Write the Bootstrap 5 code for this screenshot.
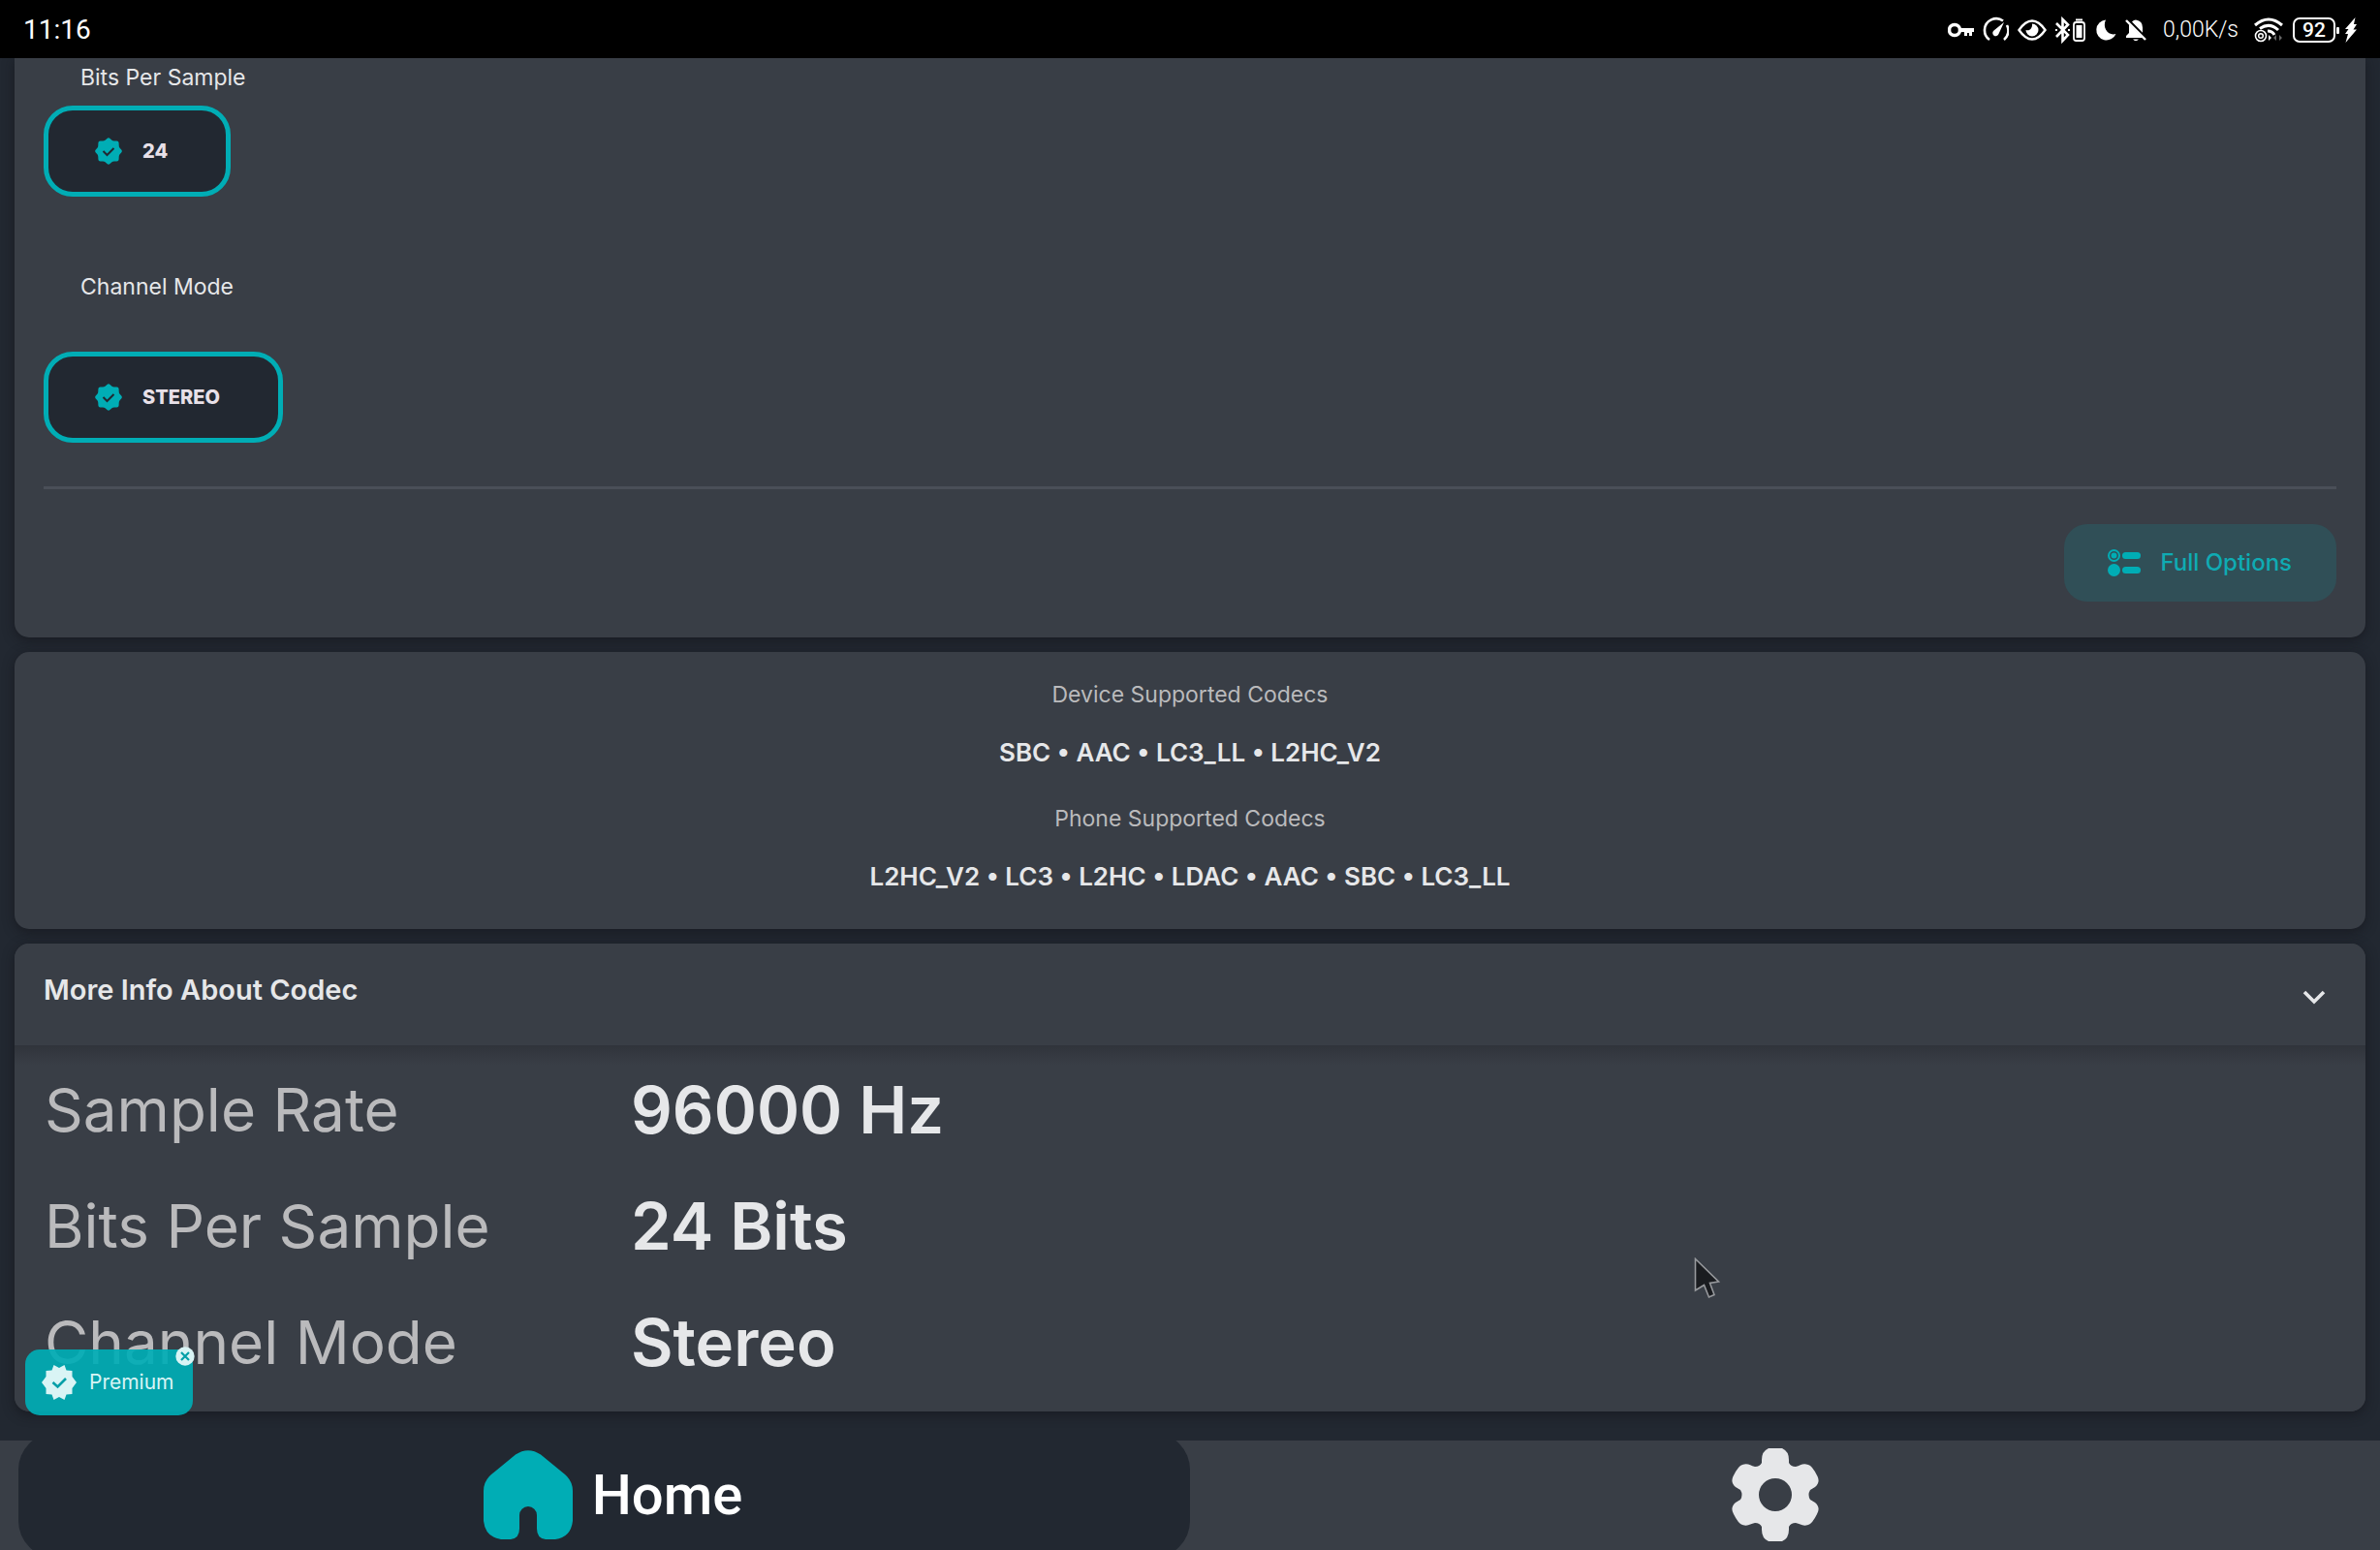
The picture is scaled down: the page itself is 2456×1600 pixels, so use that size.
<!DOCTYPE html>
<html lang="en">
<head>
<meta charset="utf-8">
<meta name="viewport" content="width=device-width, initial-scale=1">
<title>Codec settings</title>
<link rel="stylesheet" href="https://cdn.jsdelivr.net/npm/bootstrap@5.3.0/dist/css/bootstrap.min.css">
<style>
:root{--accent:#00adb5;--ink:#222831;--panel:#393e46;--text:#e6e7e9;--soft:#bababc}
body{background:var(--ink);color:var(--text);font-family:Inter,Roboto,sans-serif;font-size:23px;line-height:32px}
svg{display:block;flex:none}
.app{height:100vh;overflow:hidden}
.statusbar{height:60px;background:#000;color:#fff;padding:2px 24px 0;font-family:Roboto,sans-serif;z-index:2}
.clock{font-size:28px}
.tray{gap:9px}
.rate{font-weight:300;padding:0 6px 0 8px}
.bolt{margin-left:-4px}
.screen{padding:0 15px;gap:15px;min-height:0;flex:1 1 auto}
.panel{background:var(--panel);border-radius:15px;box-shadow:0 3px 12px rgba(20,20,26,.65);flex:none}
.panel-top{border-radius:0 0 15px 15px;padding:4px 30px 37px}
.opt-label{padding-left:38px}
.chip{height:94px;padding:0 60px 0 48px;gap:21px;border:5px solid var(--accent);border-radius:30px;background:var(--ink);color:#e8e0e8;font-size:20px;font-weight:800}
.chip-bits{margin:13px 0 77px}
.chip-mode{margin:51px 0 45px}
.rule{height:3px;margin:0 0 36px;background:#4a4f58;opacity:1;border:0}
.full{height:80px;padding:0 46px 0 45px;gap:20px;border:0;border-radius:24px;background:#304f57;color:#0fabb3;font-size:24px;font-weight:500}
.codecs{padding:28px 30px 38px;text-align:center}
.codec-label{color:var(--soft)}
.codec-list{font-size:26px;font-weight:600;margin:28px 0 36px}
.codec-list:last-child{margin-bottom:0}
.info-head{height:105px;padding:0 41px 10px 30px;background:var(--panel);color:var(--text);border:0;border-radius:15px 15px 0 0;font-size:29px;font-weight:600}
.info-body{padding:7px 30px 11px;background:linear-gradient(#30343b,#393e46 20px)}
.info-row{height:120px}
.info-key{width:605px;font-size:62px;font-weight:400;color:var(--soft);line-height:80px}
.info-val{font-size:67px;font-weight:600;line-height:80px}
.premium{left:26px;bottom:139px;width:173px;height:68px;padding:0 0 0 17px;gap:13px;border:0;border-radius:15px;background:rgba(0,173,181,.92);color:#d9f4f5;font-size:21px}
.shut{left:181px;bottom:190px;width:20px;height:20px;padding:0;border:0;background:none}
.tabs{height:113px;background:var(--panel);overflow:hidden;flex:none}
.tab{flex:1 1 0;padding:0 20px 2px 0;color:#fff;text-decoration:none;font-family:Roboto,sans-serif;font-size:58px;font-weight:500}
.tab-on{flex:0 0 calc(50% - 19px);margin:-8px 0 -8px 19px;padding:0 0 2px 18px;background:var(--ink);border-radius:38px;gap:20px}
.pointer{left:1748px;top:1298px}
</style>
<script src="https://cdn.jsdelivr.net/npm/bootstrap@5.3.0/dist/js/bootstrap.bundle.min.js"></script>
</head>
<body>
<svg width="0" height="0" class="position-absolute" aria-hidden="true">
  <symbol id="seal" viewBox="0 0 28 28"><path d="M12.500 1q1.500-1.500 3 0l2 1.800q1 .7 2.500.6l2.500.1q2 0 2.100 2l.1 2.500q0 1.500.7 2.500l1.800 2q1.300 1.500 0 3l-1.800 2q-.7 1-.7 2.500l-.1 2.500q-.1 2-2.100 2l-2.500.1q-1.500 0-2.500.7l-2 1.700q-1.500 1.500-3 0l-2-1.700q-1-.7-2.500-.7l-2.500-.1q-2 0-2.100-2L3.300 20q0-1.500-.7-2.500l-1.800-2q-1.300-1.500 0-3l1.800-2q.7-1 .7-2.500l.1-2.500q.1-2 2.100-2L8 3.400q1.500 0 2.500-.6z" fill="#00adb5"/><path d="M8.500 14l4 4 7-7" fill="none" stroke="#222831" stroke-width="2"/></symbol>
</svg>
<div class="app d-flex flex-column position-relative">
  <header class="statusbar d-flex align-items-center justify-content-between flex-shrink-0">
    <span class="clock">11:16</span>
    <div class="tray d-flex align-items-center">
      <svg width="27" height="28" viewBox="0 0 27 28"><circle cx="7" cy="14" r="5.500" fill="none" stroke="#fff" stroke-width="3.500"/><path d="M13 12h14v4h-2v4h-3v-3h-2v3h-3v-4h-4z" fill="#fff"/></svg>
      <svg width="27" height="28" viewBox="0 0 27 28"><path d="M6 24A12 12 0 0 1 1 13.500 12 12 0 0 1 20 4.500M24 9a12 12 0 0 1-3 15" transform="translate(1 0)" fill="none" stroke="#fff" stroke-width="2.600"/><path d="M22 6L16.500 18a3.200 3.200 0 1 1-5-3.500z" fill="#fff"/></svg>
      <svg width="30" height="28" viewBox="0 0 30 28"><path d="M1.500 14Q8 4.500 15 4.500T28.500 14Q22 23.500 15 23.500T1.500 14z" fill="none" stroke="#fff" stroke-width="2.400"/><path d="M15 7.500a6.500 6.500 0 1 1-6.500 6.500c4 1.500 7-2 6.500-6.500z" fill="#fff"/></svg>
      <svg width="32" height="28" viewBox="0 0 32 28"><path d="M1 7l12 12-5.500 6V3L13 8.500 1 21" fill="none" stroke="#fff" stroke-width="2.600"/><path d="M0 14h2M13 14h2" stroke="#fff" stroke-width="2"/><rect x="19" y="6" width="11" height="19" rx="2.500" fill="none" stroke="#fff" stroke-width="1.800"/><path d="M21.500 9h6v13h-6zM21 2.500h7v2h-7z" fill="#fff"/></svg>
      <svg width="22" height="28" viewBox="0 0 22 28"><path d="M11 3.500A10.500 10.500 0 1 0 21.500 18C14 20.500 7 12 11 3.500z" fill="#fff"/></svg>
      <svg width="22" height="28" viewBox="0 0 22 28"><path d="M4 8l14 14H1v-2l3-3zM7 5.500Q9 3.500 11 3.500q7 1 7 8v5.200zM8 23.500h6q-3 3.500-6 0z" fill="#fff"/><path d="M1 4l20 20" stroke="#fff" stroke-width="2.400"/></svg>
      <span class="rate">0,00K/s</span>
      <svg width="32" height="28" viewBox="0 0 32 28"><g fill="none" stroke="#fff"><path d="M2 9q14-12 28 0M7 12.500q10-7 19 1.500M15 15q5 0 7 4" stroke-width="3"/><circle cx="8" cy="20" r="5.500" stroke-width="1.600"/><circle cx="8" cy="20" r="2.300" stroke-width="1.500"/></g><path d="M16 19l3 3-3 3z" fill="#fff"/><path d="M21 22l3-3v6zM30 22l-3-3v6z" fill="#666"/></svg>
      <svg width="49" height="28" viewBox="0 0 49 28"><rect x="1" y="2" width="42" height="24" rx="6" fill="none" stroke="#fff" stroke-width="2"/><rect x="45" y="11" width="3" height="7" rx="1" fill="#fff"/><text x="22" y="21" text-anchor="middle" font-size="21" font-weight="500" fill="#fff">92</text></svg>
      <svg class="bolt" width="12" height="28" viewBox="0 0 12 28"><path d="M10.500 1L0 13h3.500L0 18h3L.500 27 12 13.500H8.500L12 8H9z" fill="#fff"/></svg>
    </div>
  </header>

  <main class="screen d-flex flex-column">
    <section class="panel panel-top">
      <div class="opt-label">Bits Per Sample</div>
      <button type="button" class="chip chip-bits d-flex align-items-center" aria-pressed="true"><svg width="28" height="28"><use href="#seal"/></svg>24</button>
      <div class="opt-label">Channel Mode</div>
      <button type="button" class="chip chip-mode d-flex align-items-center" aria-pressed="true"><svg width="28" height="28"><use href="#seal"/></svg>STEREO</button>
      <hr class="rule">
      <div class="d-flex justify-content-end">
        <button type="button" class="full d-flex align-items-center">
          <svg width="34" height="28" viewBox="0 0 34 28" fill="#00adb5"><circle cx="6.500" cy="6.500" r="5.500" fill="none" stroke="#00adb5" stroke-width="2"/><circle cx="6.500" cy="6.500" r="3"/><circle cx="6.500" cy="21.500" r="6.500"/><rect x="15" y="3" width="19" height="7" rx="3.500"/><rect x="15" y="18" width="19" height="7" rx="3.500"/></svg>
          Full Options
        </button>
      </div>
    </section>

    <section class="panel codecs">
      <div class="codec-label">Device Supported Codecs</div>
      <div class="codec-list">SBC • AAC • LC3_LL • L2HC_V2</div>
      <div class="codec-label">Phone Supported Codecs</div>
      <div class="codec-list">L2HC_V2 • LC3 • L2HC • LDAC • AAC • SBC • LC3_LL</div>
    </section>

    <section class="panel">
      <button type="button" class="info-head w-100 d-flex align-items-center justify-content-between" data-bs-toggle="collapse" data-bs-target="#info" aria-expanded="true">
        More Info About Codec
        <svg class="mt-3" width="24" height="16" viewBox="0 0 24 16"><path d="M2 2l10 10L22 2" fill="none" stroke="#e6e7e9" stroke-width="3.600"/></svg>
      </button>
      <div id="info" class="collapse show">
        <div class="info-body rounded-bottom-4">
          <table class="w-100">
            <tbody>
              <tr class="info-row"><th scope="row" class="info-key">Sample Rate</th><td class="info-val">96000 Hz</td></tr>
              <tr class="info-row"><th scope="row" class="info-key">Bits Per Sample</th><td class="info-val">24 Bits</td></tr>
              <tr class="info-row"><th scope="row" class="info-key">Channel Mode</th><td class="info-val">Stereo</td></tr>
            </tbody>
          </table>
        </div>
      </div>
    </section>
  </main>

  <nav class="tabs d-flex position-relative">
    <a href="#home" class="tab tab-on d-flex align-items-center justify-content-center" aria-current="page">
      <svg width="92" height="92" viewBox="0 0 92 92"><path d="M33 4.500Q46-4 59 4.500L84 25Q92 32 92 42V73Q90 90 74 92H64Q55 91 55 81V67a9 9 0 0 0-18 0V81Q37 91 28 92H18Q2 90 0 73V42Q0 32 8 25z" fill="#00adb5"/></svg>
      Home
    </a>
    <a href="#settings" class="tab d-flex align-items-center justify-content-center" aria-label="Settings">
      <svg width="90" height="96" viewBox="0 0 90 96"><path fill="#e6e7e9" fill-rule="evenodd" d="M38 0H52Q59 3 59 12V15Q61 19 66 19C71 18 73 15 79 17Q83 18 88 28Q92 35 86 40L81 43Q78 48 81 53L86 56Q92 61 88 68Q83 78 79 79C73 81 71 78 66 77Q61 77 59 81V84Q59 93 52 96H38Q31 93 31 84V81Q29 77 24 77C19 78 17 81 11 79Q7 78 2 68Q-2 61 4 56L9 53Q12 48 9 43L4 40Q-2 35 2 28Q7 18 11 17C17 15 19 18 24 19Q29 19 31 15V12Q31 3 38 0zM45 31a17 17 0 1 0 0 34 17 17 0 0 0 0-34z"/></svg>
    </a>
  </nav>

  <button type="button" class="premium position-absolute d-flex align-items-center">
    <svg width="36" height="36" viewBox="0 0 36 36"><path d="M18 3L23.500 0l2 5.500 6 .5v6l4.500 6-4.500 6v6l-6 .5-2 5.500L18 33l-5.500 3-2-5.500-6-.5v-6L0 18l4.500-6V6l6-.5L12.500 0z" fill="#d9f4f5"/><path d="M11.500 18l5 4.500 8.500-8.500" fill="none" stroke="#049fa8" stroke-width="2.600"/></svg>
    Premium
  </button>
  <button type="button" class="shut position-absolute" aria-label="Dismiss">
    <svg width="20" height="20" viewBox="0 0 20 20"><circle cx="10" cy="10" r="9.700" fill="#d9f4f5"/><path d="M6 6l8 8M14 6l-8 8" stroke="#049fa8" stroke-width="2.200"/></svg>
  </button>
  <svg class="pointer position-absolute" width="28" height="44" viewBox="0 0 28 44"><path d="M1.500 1.500L25.500 25l-9 1.500L21 38.500 15.500 41 10.500 28.500 1.500 34z" fill="#1a1c20" stroke="#97999d" stroke-width="1.600"/></svg>
</div>
</body>
</html>
